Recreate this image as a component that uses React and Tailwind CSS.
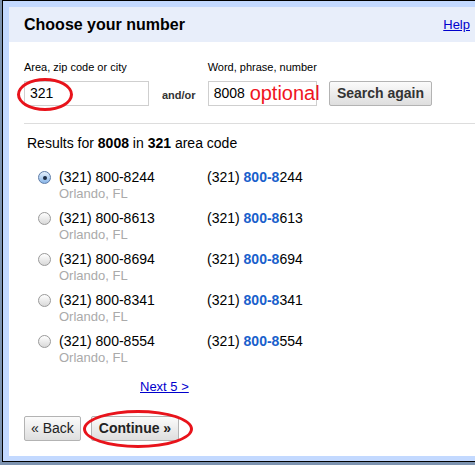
const font = { fontFamily: '"Liberation Sans", Arial, sans-serif' };

const results = [
  { suffix: "8244", checked: true },
  { suffix: "8613" },
  { suffix: "8694" },
  { suffix: "8341" },
  { suffix: "8554" },
];

function Radio({ checked }) {
  if (checked) {
    return (
      <div className="w-[13px] h-[13px] rounded-full border border-[#5d7ca8] bg-linear-to-b from-[#e4f0fc] to-[#8ab6e8] grid place-items-center">
        <div className="w-[4px] h-[4px] rounded-full bg-[#1d2d44]" />
      </div>
    );
  }
  return (
    <div className="w-[13px] h-[13px] rounded-full border border-[#9a9a9a] bg-linear-to-b from-[#ffffff] to-[#d9d9d9]" />
  );
}

function Button({ children, bold, className = "" }) {
  return (
    <div
      className={
        "h-[25px] flex items-center border border-[#b3b3b3] rounded-[2px] bg-linear-to-b from-[#fbfbfb] to-[#dedede] text-[14px] text-[#222] whitespace-nowrap " +
        (bold ? "font-bold px-[7px] " : "px-[6px] ") +
        className
      }
    >
      {children}
    </div>
  );
}

export default function App() {
  return (
    <div className="w-[475px] h-[465px] bg-[#7d93b0] pb-[3px] overflow-hidden" style={font}>
      <div className="h-full ml-[2px] border-t border-b border-l border-black bg-[#c3d9ff] pt-[6px] pl-[6px] pb-[5px]">
        <div className="h-full bg-white flex flex-col">
          {/* header */}
          <div className="h-[35px] shrink-0 bg-[#e8eefa] flex items-center justify-between pl-[15px] pr-[5px]">
            <div className="text-[16px] font-bold text-black">Choose your number</div>
            <a className="text-[13px] text-[#0000cc] underline">Help</a>
          </div>

          <div className="pl-[15px]">
            {/* search form */}
            <div className="flex items-end pt-[19px]">
              <div>
                <div className="text-[11px] leading-[13px] text-black">Area, zip code or city</div>
                <div className="relative mt-[7px] w-[125px] h-[25px] border border-[#cfcfcf] pl-[5px] flex items-center text-[14px] text-black">
                  321
                  <div className="absolute left-[-8px] top-[-4px] w-[56px] h-[33px] rounded-[50%] border-[3px] border-[#e8131b]" />
                </div>
              </div>
              <div className="ml-[13px] mb-[4px] text-[11px] leading-[13px] font-bold text-[#333]">and/or</div>
              <div className="ml-[12px]">
                <div className="text-[11px] leading-[13px] text-black">Word, phrase, number</div>
                <div className="relative mt-[7px] w-[109px] h-[25px] border border-[#cfcfcf] pl-[5px] flex items-center text-[14px] text-black">
                  8008
                  <span className="absolute left-[41px] top-[-2px] text-[20px] leading-[26px] text-[#f0141e] whitespace-nowrap">
                    optional
                  </span>
                </div>
              </div>
              <Button bold className="ml-[12px] text-[#333]">Search again</Button>
            </div>

            <div className="mt-[17px] border-t border-[#dddddd]" />

            <div className="mt-[11px] ml-[3px] text-[14px] leading-[17px] text-black">
              Results for <b>8008</b> in <b>321</b> area code
            </div>

            {/* results */}
            <div className="mt-[17px] flex flex-col gap-[8px]">
              {results.map((r) => (
                <div key={r.suffix} className="flex text-[14px] leading-[17px] text-black">
                  <div className="w-[183px] flex pl-[14px]">
                    <div className="h-[17px] flex items-center">
                      <Radio checked={r.checked} />
                    </div>
                    <div className="ml-[8px]">
                      <div>(321) 800-{r.suffix}</div>
                      <div className="text-[13px] leading-[16px] text-[#aaaaaa]">Orlando, FL</div>
                    </div>
                  </div>
                  <div>
                    (321){" "}
                    <span className="font-bold text-[#1a5fcc]">800-8</span>
                    {r.suffix.slice(1)}
                  </div>
                </div>
              ))}
            </div>

            <a className="block mt-[13px] ml-[116px] w-fit text-[13px] leading-[16px] text-[#0000cc] underline">
              Next 5 &gt;
            </a>

            {/* nav buttons */}
            <div className="mt-[21px] flex gap-[10px]">
              <Button>« Back</Button>
              <div className="relative">
                <Button bold>Continue »</Button>
                <div className="absolute left-[-8px] top-[-6px] w-[110px] h-[38px] rounded-[50%] border-[3px] border-[#e8131b]" />
              </div>
            </div>
          </div>
        </div>
      </div>
    </div>
  );
}
